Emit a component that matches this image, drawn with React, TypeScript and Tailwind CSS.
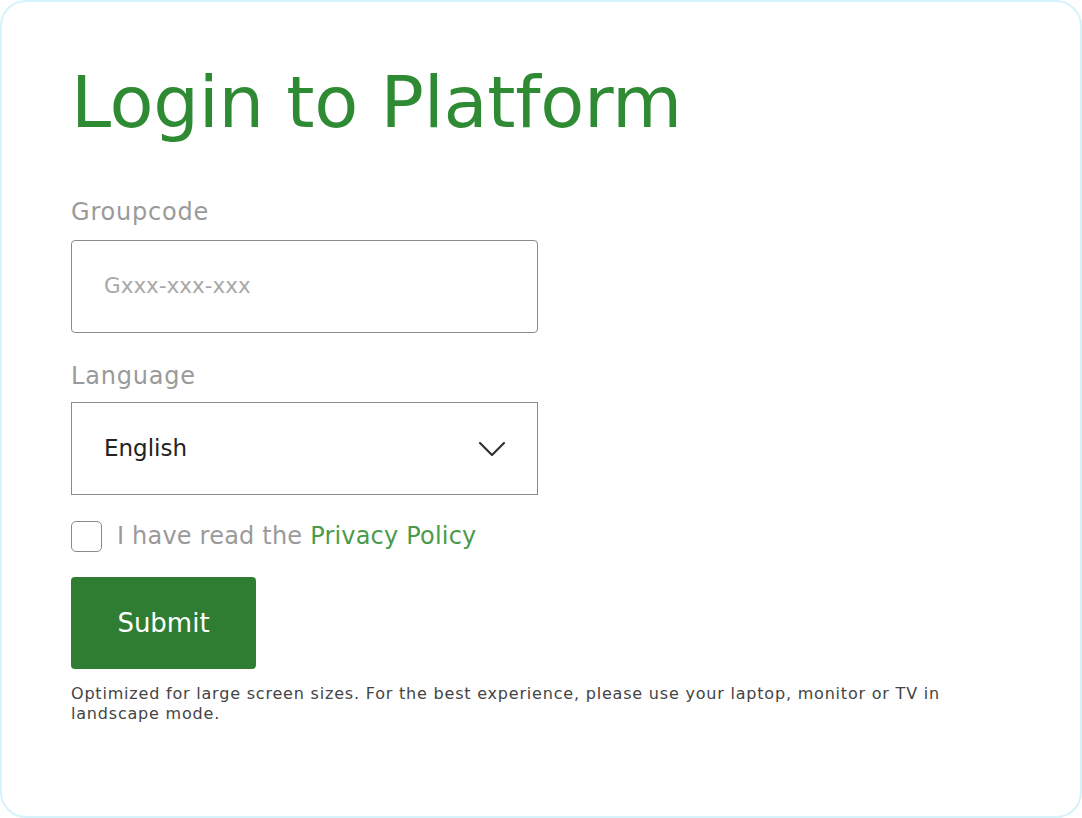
import React from "react";

export default function App() {
  return (
    <div className="w-[1082px] h-[818px] bg-white" style={{ fontFamily: '"Century Gothic", "DejaVu Sans", sans-serif' }}>
      <div className="w-full h-full border-2 border-[#d6f3fb] rounded-[26px] pl-[69px] pr-[68px] pt-[55px] box-border">
        <h1 className="text-[72px] leading-[90px] text-[#2f8a34] font-normal tracking-[-0.3px]">Login to Platform</h1>
        <div className="mt-[50px] text-[24px] leading-[30px] text-[#9a9a9a] tracking-[0.8px]">Groupcode</div>
        <div className="mt-[13px] w-[467px] h-[93px] border border-[#8a8a8a] rounded-[4px] flex items-center pl-[32px]">
          <span className="text-[21.5px] text-[#a8a8a8]">Gxxx-xxx-xxx</span>
        </div>
        <div className="mt-[28px] text-[24px] leading-[30px] text-[#9a9a9a] tracking-[0.8px]">Language</div>
        <div className="mt-[11px] w-[467px] h-[93px] border border-[#8a8a8a] flex items-center justify-between pl-[32px] pr-[31px]">
          <span className="text-[23px] text-[#222]">English</span>
          <svg width="28" height="16" viewBox="0 0 28 16" fill="none" stroke="#333" strokeWidth="2.2" strokeLinecap="round" strokeLinejoin="round">
            <path d="M2 2 L14 14 L26 2" />
          </svg>
        </div>
        <div className="mt-[23px] flex items-center gap-[15px]">
          <div className="w-[31px] h-[31px] border-[1.5px] border-[#8a8a8a] rounded-[5px]" />
          <span className="text-[24px] text-[#9a9a9a] tracking-[0.2px]">
            I have read the <span className="text-[#4b9a4b]">Privacy Policy</span>
          </span>
        </div>
        <button className="mt-[23px] w-[185px] h-[92px] bg-[#2e7d32] rounded-[4px] text-white text-[26px] flex items-center justify-center">
          Submit
        </button>
        <p className="mt-[15px] w-[920px] text-[16px] leading-[20px] text-[#444] tracking-[0.8px]">
          Optimized for large screen sizes. For the best experience, please use your laptop, monitor or TV in landscape mode.
        </p>
      </div>
    </div>
  );
}
